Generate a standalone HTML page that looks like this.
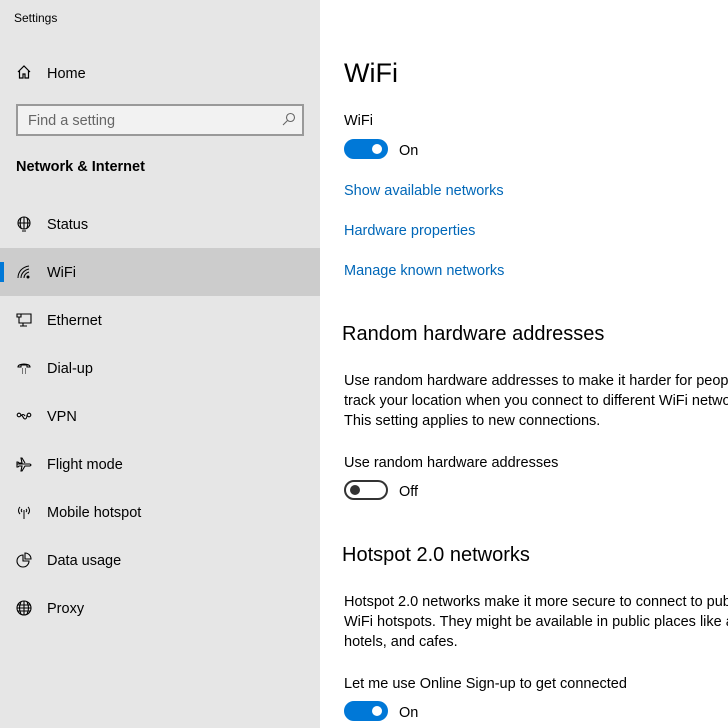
<!DOCTYPE html><html><head><style>
body{margin:0;width:728px;height:728px;overflow:hidden;font-family:"Liberation Sans",sans-serif;background:#fff;position:relative;color:#000}
.wrap{position:absolute;left:0;top:0;width:728px;height:728px;overflow:hidden}
.sb{position:absolute;left:0;top:0;width:320px;height:728px;background:#e6e6e6}
.a{position:absolute;white-space:nowrap}
.t{font-size:14.5px}
.nav{position:absolute;left:0;width:320px;height:48px}
.nav span{position:absolute;left:47px;top:17px;font-size:14.5px}
.nav svg{position:absolute;left:16px;top:16px}
.lnk{color:#0067b8;font-size:14.5px}
.tog{position:absolute;width:40px;height:16px;border:2px solid #0078d7;background:#0078d7;border-radius:10px}
.tog::after{content:"";position:absolute;right:4px;top:3px;width:10px;height:10px;border-radius:50%;background:#fff}
.off{background:#fff;border-color:#333}
.off::after{left:4px;right:auto;background:#333}
h2{margin:0;font-weight:normal;font-size:20px;position:absolute;white-space:nowrap}
</style></head><body><div class="wrap">
<div class="sb">
<div class="a" style="left:14px;top:11px;font-size:12px">Settings</div>
<svg class="a" style="left:16px;top:64px" width="16" height="16" viewBox="0 0 16 16" fill="none" stroke="#000" stroke-width="1.2"><path d="M2 8L8 2l6 6M3.5 6.5V14h3.5v-4h2v4h3.5V6.5"/></svg>
<div class="a t" style="left:47px;top:66px">Home</div>
<div class="a" style="left:16px;top:104px;width:284px;height:28px;border:2px solid #999;background:#f2f2f2"></div>
<div class="a t" style="left:28px;top:113px;color:#666">Find a setting</div>
<svg class="a" style="left:282px;top:112px" width="14" height="14" viewBox="0 0 14 14" fill="none" stroke="#666" stroke-width="1.1"><circle cx="8.5" cy="5.5" r="4"/><path d="M5.5 8.5L1 13"/></svg>
<div class="a" style="left:16px;top:159px;font-size:14.5px;font-weight:bold">Network &amp; Internet</div>
<div class="nav" style="top:200px"><svg width="16" height="16" viewBox="0 0 16 16" fill="none" stroke="#000" stroke-width="1.1"><circle cx="8" cy="7" r="6"/><path d="M2 7h12M8 1v12M5 2c-1 3-1 7 0 10M11 2c1 3 1 7 0 10M6 15h4"/></svg><span>Status</span></div>
<div class="nav" style="top:248px;background:#ccc"><div class="a" style="left:0;top:14px;width:4px;height:20px;background:#0078d7"></div><svg width="16" height="16" viewBox="0 0 16 16" fill="none" stroke="#000" stroke-width="1"><path d="M2 14C2 8 6 3 13 2M5 14C5 10 8 6 13 5M8 14c0-3 2-5 5-6"/><circle cx="12" cy="13" r="1" fill="#000"/></svg><span>WiFi</span></div>
<div class="nav" style="top:296px"><svg width="16" height="16" viewBox="0 0 16 16" fill="none" stroke="#000" stroke-width="1.1"><path d="M5 2h10v9H3V5M1 2h4v3H1zM7 11v3M4 14h7"/></svg><span>Ethernet</span></div>
<div class="nav" style="top:344px"><svg width="16" height="16" viewBox="0 0 16 16" fill="none" stroke="#000" stroke-width="1.1"><path d="M2 7c0-4 12-4 12 0H11V5H5v2z"/><path d="M6 9h1M9 9h1M6 11h1M9 11h1M6 13h1M9 13h1" stroke-width="1"/></svg><span>Dial-up</span></div>
<div class="nav" style="top:392px"><svg width="16" height="16" viewBox="0 0 16 16" fill="none" stroke="#000" stroke-width="1.1"><circle cx="3" cy="7" r="1.8"/><circle cx="13" cy="7" r="1.8"/><path d="M5 7c2 0 2 4 4 4s2-4 2-4M5 8c1-2 3-2 4 0"/></svg><span>VPN</span></div>
<div class="nav" style="top:440px"><svg width="16" height="16" viewBox="0 0 16 16" fill="none" stroke="#000" stroke-width="1.1"><path d="M1 8h13l1 1-1 1H9l-3 5H5l1-5H3l-1 1H1V6h1l1 1h3L5 2h1l3 5"/></svg><span>Flight mode</span></div>
<div class="nav" style="top:488px"><svg width="16" height="16" viewBox="0 0 16 16" fill="none" stroke="#000" stroke-width="1"><path d="M8 6v9M4 3c-2 2-2 5 0 7M12 3c2 2 2 5 0 7M6 5c-1 1-1 2 0 3M10 5c1 1 1 2 0 3"/></svg><span>Mobile hotspot</span></div>
<div class="nav" style="top:536px"><svg width="16" height="16" viewBox="0 0 16 16" fill="none" stroke="#000" stroke-width="1.1"><path d="M7 3a6 6 0 1 0 6 6H7z"/><path d="M9 1a6 6 0 0 1 6 6H9z"/></svg><span>Data usage</span></div>
<div class="nav" style="top:584px"><svg width="16" height="16" viewBox="0 0 16 16" fill="none" stroke="#000" stroke-width="1.1"><circle cx="8" cy="8" r="7"/><path d="M1 8h14M8 1v14M5 2c-2 4-2 8 0 12M11 2c2 4 2 8 0 12M2 5h12M2 11h12"/></svg><span>Proxy</span></div>
</div>
<div class="a" style="left:344px;top:58px;font-size:27px">WiFi</div>
<div class="a t" style="left:344px;top:113px">WiFi</div>
<div class="tog" style="left:344px;top:139px"></div>
<div class="a t" style="left:399px;top:143px">On</div>
<div class="a lnk" style="left:344px;top:183px">Show available networks</div>
<div class="a lnk" style="left:344px;top:223px">Hardware properties</div>
<div class="a lnk" style="left:344px;top:263px">Manage known networks</div>
<h2 style="left:342px;top:323px">Random hardware addresses</h2>
<div class="a t" style="left:344px;top:371px;line-height:20px">Use random hardware addresses to make it harder for people to<br>track your location when you connect to different WiFi networks.<br>This setting applies to new connections.</div>
<div class="a t" style="left:344px;top:455px">Use random hardware addresses</div>
<div class="tog off" style="left:344px;top:480px"></div>
<div class="a t" style="left:399px;top:484px">Off</div>
<h2 style="left:342px;top:544px">Hotspot 2.0 networks</h2>
<div class="a t" style="left:344px;top:592px;line-height:20px">Hotspot 2.0 networks make it more secure to connect to public<br>WiFi hotspots. They might be available in public places like airports,<br>hotels, and cafes.</div>
<div class="a t" style="left:344px;top:676px">Let me use Online Sign-up to get connected</div>
<div class="tog" style="left:344px;top:701px"></div>
<div class="a t" style="left:399px;top:705px">On</div>
</div></body></html>
